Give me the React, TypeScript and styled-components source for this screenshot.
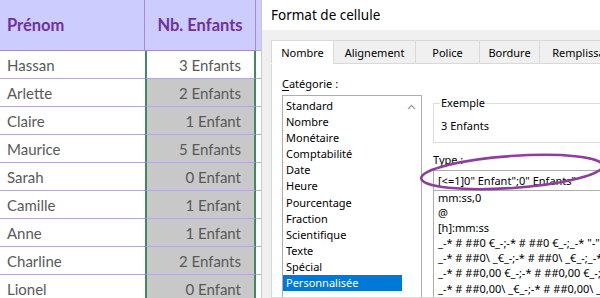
import React from "react";
import styled, { createGlobalStyle } from "styled-components";

const Global = createGlobalStyle`
  html, body { margin: 0; padding: 0; background: #ffffff; }
  #root { width: 600px; height: 298px; overflow: hidden; }
`;

const Page = styled.div`
  position: relative;
  display: flex;
  width: 600px;
  height: 298px;
  overflow: hidden;
  background: #ffffff;
`;

/* ---------- spreadsheet ---------- */
const Sheet = styled.div`
  display: grid;
  grid-template-columns: 145px 111px 5px;
  grid-template-rows: 51px;
  grid-auto-rows: 28px;
  flex: none;
  font-family: "Lato", "Liberation Sans", sans-serif;
`;

const HeadCell = styled.div<{ $align: "left" | "center" }>`
  display: flex;
  align-items: center;
  justify-content: ${(p) => (p.$align === "left" ? "flex-start" : "center")};
  padding-left: ${(p) => (p.$align === "left" ? "7px" : "0")};
  background: #ccccfe;
  color: #7030a0;
  font-weight: 700;
  font-size: 16.5px;
  border-bottom: 1px solid #a58bc9;
  border-right: 1px solid #a58bc9;
  box-sizing: border-box;
`;

const NameCell = styled.div`
  display: flex;
  align-items: center;
  padding-left: 7px;
  color: #595959;
  font-size: 15px;
  border-bottom: 1px solid #b9a8d4;
  box-sizing: border-box;
`;

const ValueCell = styled.div<{ $active: boolean }>`
  display: flex;
  align-items: center;
  justify-content: flex-end;
  padding-right: 13px;
  color: #595959;
  font-size: 15px;
  background: ${(p) => (p.$active ? "#ffffff" : "#c8c8c8")};
  border-left: 2px solid #3f8a5f;
  border-right: 2px solid #3f8a5f;
  border-bottom: 1px solid #b9a8d4;
  box-sizing: border-box;
`;

const EdgeCell = styled.div<{ $head?: boolean }>`
  background: ${(p) => (p.$head ? "#ccccfe" : "#ffffff")};
  border-bottom: 1px solid #b9a8d4;
  box-sizing: border-box;
`;

/* ---------- dialog ---------- */
const Dialog = styled.div`
  flex: 1;
  display: flex;
  flex-direction: column;
  min-width: 0;
  background: #f0f0f0;
  border-left: 1px solid #c9c9c9;
  font-family: "Noto Sans", "Open Sans", sans-serif;
  font-size: 11px;
  color: #000000;
`;

const TitleBar = styled.div`
  height: 30px;
  flex: none;
  display: flex;
  align-items: center;
  padding-left: 9px;
  background: #ffffff;
  font-size: 13.5px;
`;

const Body = styled.div`
  flex: 1;
  display: flex;
  flex-direction: column;
  padding: 10px 0 0 9px;
  min-height: 0;
`;

const Tabs = styled.div`
  display: flex;
  height: 24px;
  flex: none;
  padding-left: 1px;
`;

const Tab = styled.div<{ $active?: boolean; $w: number }>`
  width: ${(p) => p.$w}px;
  flex: none;
  display: flex;
  align-items: center;
  justify-content: center;
  box-sizing: border-box;
  background: ${(p) => (p.$active ? "#ffffff" : "#f0f0f0")};
  border: 1px solid #d9d9d9;
  border-bottom: ${(p) => (p.$active ? "1px solid #ffffff" : "1px solid #d9d9d9")};
  margin-left: -1px;
  position: relative;
  z-index: ${(p) => (p.$active ? 1 : 0)};
  white-space: nowrap;
  overflow: hidden;
`;

const Panel = styled.div`
  flex: 1;
  display: flex;
  gap: 11px;
  margin-top: -1px;
  padding: 10px 0 0 10px;
  background: #ffffff;
  border: 1px solid #d9d9d9;
  border-right: none;
  min-height: 0;
`;

const LeftCol = styled.div`
  width: 140px;
  flex: none;
  display: flex;
  flex-direction: column;
`;

const Label = styled.div`
  height: 20px;
  line-height: 20px;
  & u { text-decoration: underline; text-underline-offset: 2px; }
`;

const ListBox = styled.div`
  flex: 1;
  display: flex;
  margin-top: 1px;
  border: 1px solid #adadad;
  border-bottom: none;
  padding-top: 2px;
  box-sizing: border-box;
`;

const Items = styled.div`
  flex: 1;
  display: flex;
  flex-direction: column;
`;

const Item = styled.div<{ $sel?: boolean }>`
  height: 16.1px;
  line-height: 16px;
  flex: none;
  padding-left: 3px;
  white-space: nowrap;
  background: ${(p) => (p.$sel ? "#0078d7" : "transparent")};
  color: ${(p) => (p.$sel ? "#ffffff" : "#000000")};
`;

const ScrollBar = styled.div`
  width: 19px;
  flex: none;
  display: flex;
  justify-content: center;
  padding-top: 6px;
  box-sizing: border-box;
`;

const RightCol = styled.div`
  flex: 1;
  min-width: 0;
  display: flex;
  flex-direction: column;
  overflow: hidden;
`;

const Group = styled.fieldset`
  margin: 22px 0 0 0;
  padding: 8px 0 0 7px;
  height: 47px;
  box-sizing: border-box;
  border: 1px solid #dcdcdc;
  border-right: none;
  line-height: 16px;
  & legend {
    padding: 0 1px;
    margin-left: -1px;
    line-height: 14px;
  }
`;

const TypeLabel = styled.div`
  margin-top: 10px;
  height: 14px;
  line-height: 14px;
`;

const Input = styled.div`
  margin-top: 3px;
  height: 21px;
  line-height: 19px;
  padding-left: 4px;
  border: 1px solid #adadad;
  border-right: none;
  box-sizing: border-box;
  white-space: nowrap;
`;

const CodeList = styled.div`
  flex: 1;
  margin-top: -1px;
  border-left: 1px solid #adadad;
  padding: 0 0 0 4px;
  white-space: nowrap;
  overflow: hidden;
`;

const Code = styled.div`
  height: 15.1px;
  line-height: 15px;
`;

const Ellipse = styled.svg`
  position: absolute;
  left: 410px;
  top: 145px;
  pointer-events: none;
`;

const rows: [string, number][] = [
  ["Hassan", 3],
  ["Arlette", 2],
  ["Claire", 1],
  ["Maurice", 5],
  ["Sarah", 0],
  ["Camille", 1],
  ["Anne", 1],
  ["Charline", 2],
  ["Lionel", 0],
];

const categories = [
  "Standard",
  "Nombre",
  "Monétaire",
  "Comptabilité",
  "Date",
  "Heure",
  "Pourcentage",
  "Fraction",
  "Scientifique",
  "Texte",
  "Spécial",
  "Personnalisée",
];

const codes = [
  "mm:ss,0",
  "@",
  "[h]:mm:ss",
  '_-* # ##0 €_-;-* # ##0 €_-;_-* "-" €_-;_-@_-',
  "_-* # ##0\\ _€_-;-* # ##0\\ _€_-;_-* \"-\"\\ _€_-;_-@_-",
  '_-* # ##0,00 €_-;-* # ##0,00 €_-;_-* "-"?? €_-;_-@_-',
  "_-* # ##0,00\\ _€_-;-* # ##0,00\\ _€_-;_-* \"-\"??\\ _€_-;_-@_-",
];

const tabs: [string, number][] = [
  ["Nombre", 63],
  ["Alignement", 83],
  ["Police", 65],
  ["Bordure", 61],
  ["Remplissage", 92],
];

export default function App() {
  return (
    <Page>
      <Global />
      <Sheet>
        <HeadCell $align="left">Prénom</HeadCell>
        <HeadCell $align="center">Nb. Enfants</HeadCell>
        <EdgeCell $head />
        {rows.map(([name, n], i) => (
          <React.Fragment key={name}>
            <NameCell>{name}</NameCell>
            <ValueCell $active={i === 0}>
              {n} {n <= 1 ? "Enfant" : "Enfants"}
            </ValueCell>
            <EdgeCell />
          </React.Fragment>
        ))}
      </Sheet>
      <Dialog>
        <TitleBar>Format de cellule</TitleBar>
        <Body>
          <Tabs>
            {tabs.map(([t, w], i) => (
              <Tab key={t} $active={i === 0} $w={w}>
                {t}
              </Tab>
            ))}
          </Tabs>
          <Panel>
            <LeftCol>
              <Label>
                <u>C</u>atégorie :
              </Label>
              <ListBox>
                <Items>
                  {categories.map((c) => (
                    <Item key={c} $sel={c === "Personnalisée"}>
                      {c}
                    </Item>
                  ))}
                </Items>
                <ScrollBar>
                  <svg width="9" height="6" viewBox="0 0 9 6">
                    <path d="M1 5 L4.5 1.5 L8 5" fill="none" stroke="#a0a0a0" strokeWidth="1.3" />
                  </svg>
                </ScrollBar>
              </ListBox>
            </LeftCol>
            <RightCol>
              <Group>
                <legend>Exemple</legend>
                3 Enfants
              </Group>
              <TypeLabel>Type :</TypeLabel>
              <Input>[&lt;=1]0" Enfant";0" Enfants"</Input>
              <CodeList>
                {codes.map((c) => (
                  <Code key={c}>{c}</Code>
                ))}
              </CodeList>
            </RightCol>
          </Panel>
        </Body>
      </Dialog>
      <Ellipse width="200" height="70" viewBox="0 0 200 70">
        <ellipse
          cx="102"
          cy="27"
          rx="91"
          ry="16"
          transform="rotate(-4 102 27)"
          fill="none"
          stroke="#8e3f9c"
          strokeWidth="2.6"
        />
      </Ellipse>
    </Page>
  );
}
